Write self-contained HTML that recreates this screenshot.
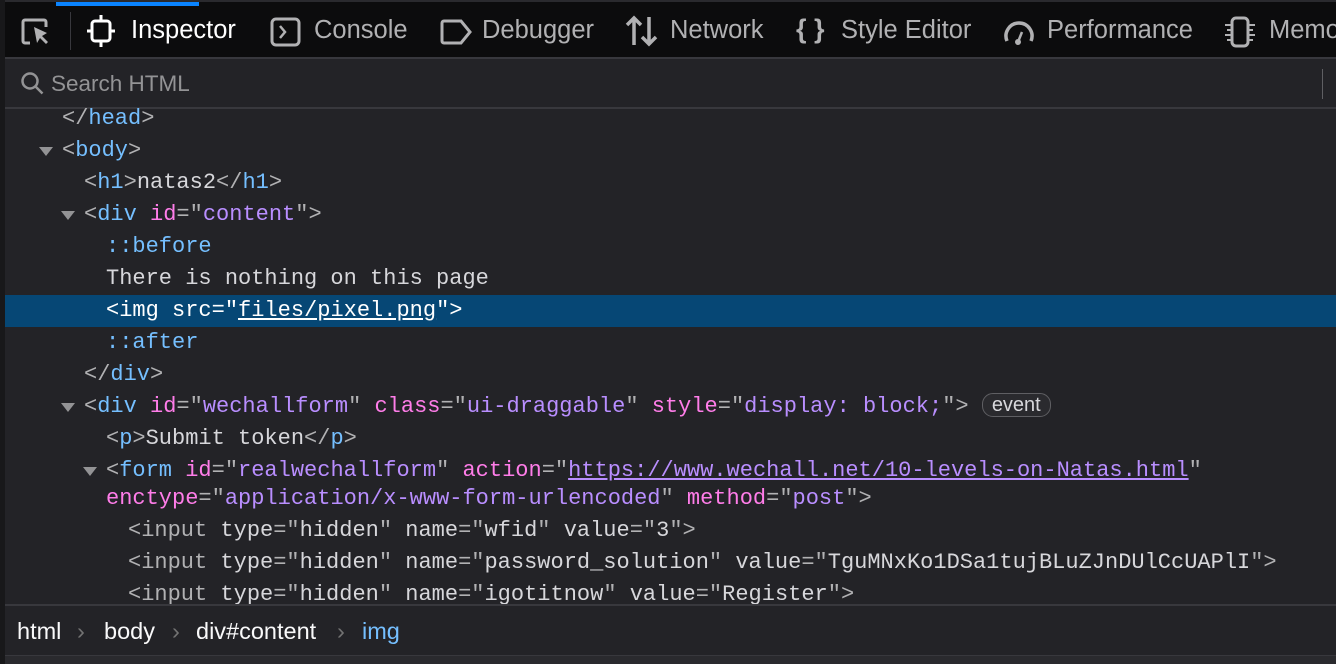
<!DOCTYPE html>
<html><head><meta charset="utf-8"><style>
*{margin:0;padding:0;box-sizing:border-box}
body{width:1336px;height:664px;overflow:hidden;background:#232327;font-family:"Liberation Sans",sans-serif;position:relative}
#left{position:absolute;left:0;top:0;width:5px;height:664px;background:#18181a;z-index:5}
#tb{position:absolute;left:0;top:0;width:1336px;height:59px;background:#0c0c0d;border-top:2px solid #2a2a2e;border-bottom:2px solid #38383d}
#ind{position:absolute;left:56px;top:0;width:143px;height:4px;background:#0a84ff}
.t{position:absolute;top:14px;font-size:25.5px;color:#b1b1b3;white-space:nowrap}
.ic{position:absolute;top:14px}
#sep{position:absolute;left:70px;top:10px;width:1px;height:38px;background:#38383d}
#search{position:absolute;left:0;top:59px;width:1336px;height:50px;background:#232327;border-bottom:2px solid #38383d}
#search span{position:absolute;left:51px;top:12px;font-size:22.5px;color:#939395}
#code{position:absolute;left:0;top:103px;width:1336px;font-family:"Liberation Mono",monospace;font-size:22px;color:#d7d7db}
.r{position:absolute;left:0;width:1336px;height:32px;line-height:32px;white-space:pre}
.g{color:#b1b1b3}.b{color:#75bfff}.p{color:#ff7de9}.v{color:#b98eff}
.u{text-decoration:underline}
.tw{position:absolute;width:0;height:0;border-left:7px solid transparent;border-right:7px solid transparent;border-top:9px solid #939395;top:12px}
.sel{background:#064775;color:#fff}
.sel .g,.sel .b,.sel .v{color:#fff}
#ev{display:inline-block;border:1.5px solid #5f5f63;border-radius:11px;background:#2a2a2e;font-family:"Liberation Sans",sans-serif;font-size:20px;line-height:22px;padding:0 9px;color:#d7d7db;vertical-align:1px}
#bc{position:absolute;left:0;top:604px;width:1336px;height:52px;background:#232327;border-top:2px solid #38383d;font-size:23.5px;color:#f9f9fa}
#bc span{position:absolute;top:12px}
#bot{position:absolute;left:0;top:655px;width:1336px;height:9px;background:#2a2a2e;border-top:1px solid #38383d}
</style></head><body>
<div id="left"></div>
<div id="tb">
<div id="ind"></div>
<svg class="ic" style="left:20px;top:14px" width="34" height="30" viewBox="0 0 34 30"><path d="M10 27H5a2 2 0 0 1-2-2V6a2 2 0 0 1 2-2h19a2 2 0 0 1 2 2v5" fill="none" stroke="#b1b1b3" stroke-width="3"/><path d="M14 11l3 16 3-5 6 6 2-2-6-6 5-3z" fill="#b1b1b3"/></svg>
<div id="sep"></div>
<svg class="ic" style="left:87px;top:12px" width="28" height="34" viewBox="0 0 28 34"><rect x="5" y="7" width="18" height="20" rx="3" fill="none" stroke="#fff" stroke-width="3"/><path d="M14 1v6M14 27v6M0 17h5M23 17h5" stroke="#fff" stroke-width="3"/></svg>
<div class="t" style="left:131px;color:#fff">Inspector</div>
<svg class="ic" style="left:270px;top:15px" width="32" height="30" viewBox="0 0 32 30"><rect x="2" y="2" width="27" height="26" rx="4" fill="none" stroke="#b1b1b3" stroke-width="3"/><path d="M10 9l5 6-5 6" fill="none" stroke="#b1b1b3" stroke-width="2.5"/></svg>
<div class="t" style="left:314px">Console</div>
<svg class="ic" style="left:439px;top:17px" width="34" height="26" viewBox="0 0 34 26"><path d="M3 4a2 2 0 0 1 2-2h17l9 11-9 11H5a2 2 0 0 1-2-2z" fill="none" stroke="#b1b1b3" stroke-width="3"/></svg>
<div class="t" style="left:482px">Debugger</div>
<svg class="ic" style="left:625px;top:13px" width="34" height="32" viewBox="0 0 34 32"><path d="M9 30V3M2 10l7-7 7 7M24 2v27M17 22l7 7 7-7" fill="none" stroke="#b1b1b3" stroke-width="3.5"/></svg>
<div class="t" style="left:670px">Network</div>
<div class="t" style="left:796px;font-weight:bold;font-size:27px;top:12px">{ }</div>
<div class="t" style="left:841px">Style Editor</div>
<svg class="ic" style="left:1002px;top:13px" width="34" height="32" viewBox="0 0 34 32"><path d="M5 26A13 13 0 1 1 29 26" fill="none" stroke="#b1b1b3" stroke-width="3.5"/><path d="M16 27l4-10" stroke="#b1b1b3" stroke-width="2.5"/><circle cx="16" cy="27" r="3" fill="#b1b1b3"/></svg>
<div class="t" style="left:1047px">Performance</div>
<svg class="ic" style="left:1222px;top:14px" width="36" height="32" viewBox="0 0 36 32"><rect x="10" y="2" width="16" height="28" rx="4" fill="none" stroke="#b1b1b3" stroke-width="3"/><path d="M3 9h7M5 14h5M3 19h7M5 24h5M26 9h7M26 14h5M26 19h7M26 24h5" stroke="#b1b1b3" stroke-width="2"/></svg>
<div class="t" style="left:1269px">Memo</div>
</div>
<div id="search">
<svg style="position:absolute;left:20px;top:12px" width="26" height="26" viewBox="0 0 26 26"><circle cx="10" cy="10" r="7.5" fill="none" stroke="#939395" stroke-width="2.5"/><path d="M15.5 15.5l7 7" stroke="#939395" stroke-width="2.5"/></svg>
<span>Search HTML</span>
<div style="position:absolute;left:1322px;top:10px;width:1px;height:30px;background:#5f5f63"></div>
</div>
<div id="code">
<div class="r" style="top:0px;padding-left:62px"><span class="g">&lt;/</span><span class="b">head</span><span class="g">&gt;</span></div>
<div class="r" style="top:32px;padding-left:62px"><i class="tw" style="left:39px"></i><span class="g">&lt;</span><span class="b">body</span><span class="g">&gt;</span></div>
<div class="r" style="top:64px;padding-left:84px"><span class="g">&lt;</span><span class="b">h1</span><span class="g">&gt;</span>natas2<span class="g">&lt;/</span><span class="b">h1</span><span class="g">&gt;</span></div>
<div class="r" style="top:96px;padding-left:84px"><i class="tw" style="left:61px"></i><span class="g">&lt;</span><span class="b">div</span> <span class="p">id</span><span class="g">="</span><span class="v">content</span><span class="g">"&gt;</span></div>
<div class="r" style="top:128px;padding-left:106px"><span class="b">::before</span></div>
<div class="r" style="top:160px;padding-left:106px">There is nothing on this page</div>
<div class="r sel" style="top:192px;left:5px;width:1331px;padding-left:101px"><span class="g">&lt;</span><span class="b">img</span> <span class="p" style="color:#fff">src</span><span class="g">="</span><span class="v u">files/pixel.png</span><span class="g">"&gt;</span></div>
<div class="r" style="top:224px;padding-left:106px"><span class="b">::after</span></div>
<div class="r" style="top:256px;padding-left:84px"><span class="g">&lt;/</span><span class="b">div</span><span class="g">&gt;</span></div>
<div class="r" style="top:288px;padding-left:84px"><i class="tw" style="left:61px"></i><span class="g">&lt;</span><span class="b">div</span> <span class="p">id</span><span class="g">="</span><span class="v">wechallform</span><span class="g">"</span> <span class="p">class</span><span class="g">="</span><span class="v">ui-draggable</span><span class="g">"</span> <span class="p">style</span><span class="g">="</span><span class="v">display: block;</span><span class="g">"&gt;</span> <span id="ev">event</span></div>
<div class="r" style="top:320px;padding-left:106px"><span class="g">&lt;</span><span class="b">p</span><span class="g">&gt;</span>Submit token<span class="g">&lt;/</span><span class="b">p</span><span class="g">&gt;</span></div>
<div class="r" style="top:352px;padding-left:106px"><i class="tw" style="left:83px"></i><span class="g">&lt;</span><span class="b">form</span> <span class="p">id</span><span class="g">="</span><span class="v">realwechallform</span><span class="g">"</span> <span class="p">action</span><span class="g">="</span><span class="v u">https://www.wechall.net/10-levels-on-Natas.html</span><span class="g">"</span></div>
<div class="r" style="top:380px;padding-left:106px"><span class="p">enctype</span><span class="g">="</span><span class="v">application/x-www-form-urlencoded</span><span class="g">"</span> <span class="p">method</span><span class="g">="</span><span class="v">post</span><span class="g">"&gt;</span></div>
<div class="r" style="top:412px;padding-left:128px"><span class="g">&lt;input</span> <span>type</span><span class="g">="</span>hidden<span class="g">"</span> name<span class="g">="</span>wfid<span class="g">"</span> value<span class="g">="</span>3<span class="g">"&gt;</span></div>
<div class="r" style="top:444px;padding-left:128px"><span class="g">&lt;input</span> type<span class="g">="</span>hidden<span class="g">"</span> name<span class="g">="</span>password_solution<span class="g">"</span> value<span class="g">="</span>TguMNxKo1DSa1tujBLuZJnDUlCcUAPlI<span class="g">"&gt;</span></div>
<div class="r" style="top:476px;padding-left:128px"><span class="g">&lt;input</span> type<span class="g">="</span>hidden<span class="g">"</span> name<span class="g">="</span>igotitnow<span class="g">"</span> value<span class="g">="</span>Register<span class="g">"&gt;</span></div>
</div>
<div id="bc">
<span style="left:17px">html</span><span style="left:77px;color:#737373">›</span>
<span style="left:104px">body</span><span style="left:172px;color:#737373">›</span>
<span style="left:196px">div#content</span><span style="left:337px;color:#737373">›</span>
<span style="left:362px;color:#75bfff">img</span>
</div>
<div id="bot"></div>
</body></html>
